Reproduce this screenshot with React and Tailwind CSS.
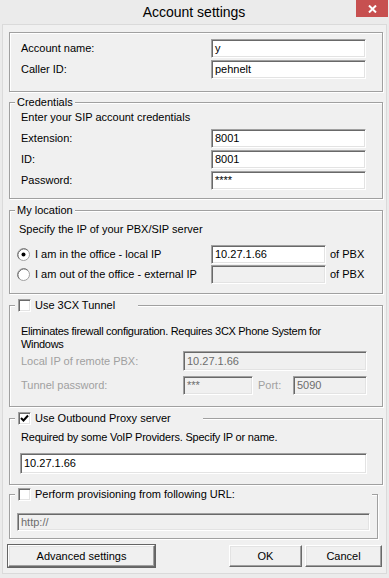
import React from "react";

const sunken =
  "border border-t-[#a0a0a0] border-l-[#a0a0a0] border-b-white border-r-white shadow-[inset_1px_1px_0_#696969,inset_-1px_-1px_0_#e3e3e3]";

function Field({ value, disabled, className = "" }) {
  return (
    <div
      className={`${sunken} ${className} ${
        disabled ? "bg-[#f0f0f0] text-[#6d6d6d]" : "bg-white text-black"
      } flex items-center pl-[3px] text-[11px] leading-none`}
    >
      {value}
    </div>
  );
}

function Check({ checked }) {
  return (
    <div className={`${sunken} w-[13px] h-[13px] bg-white shrink-0 flex items-center justify-center`}>
      {checked && (
        <svg width="9" height="9" viewBox="0 0 9 9">
          <path d="M1 4 L3.5 6.5 L8 1.5" fill="none" stroke="#000" strokeWidth="2" />
        </svg>
      )}
    </div>
  );
}

function Radio({ checked }) {
  return (
    <svg width="13" height="13" viewBox="0 0 13 13" className="shrink-0">
      <circle cx="6.5" cy="6.5" r="6" fill="#fff" stroke="#a0a0a0" />
      <path d="M2.3 10.7 A6 6 0 0 1 10.7 2.3" fill="none" stroke="#696969" />
      {checked && <circle cx="6.5" cy="6.5" r="2" fill="#000" />}
    </svg>
  );
}

function Group({ legend, className = "", children }) {
  return (
    <fieldset
      className={`border border-[#a0a0a0] shadow-[1px_1px_0_#fff,inset_1px_1px_0_#fff] px-[5px] ${className}`}
    >
      {legend}
      {children}
    </fieldset>
  );
}

function TextLegend({ text }) {
  return <legend className="px-[2px] leading-[13px] bg-[#f0f0f0]">{text}</legend>;
}

function CheckLegend({ text, checked, width }) {
  return (
    <legend className={`${width} h-[13px] pl-[3px] flex items-center gap-[4px] bg-[#f0f0f0]`}>
      <Check checked={checked} />
      <span className="leading-[13px]">{text}</span>
    </legend>
  );
}

function Row({ label, value }) {
  return (
    <div className="flex items-center">
      <span className="w-[190px]">{label}</span>
      <Field value={value} className="w-[155px] h-[19px]" />
    </div>
  );
}

function Button({ children, className = "" }) {
  return (
    <button
      type="button"
      className={`h-[22px] bg-[#f0f0f0] border border-t-white border-l-white border-b-[#696969] border-r-[#696969] shadow-[inset_-1px_-1px_0_#a0a0a0,inset_1px_1px_0_#e3e3e3] text-[11px] leading-none text-black ${className}`}
    >
      {children}
    </button>
  );
}

export default function App() {
  return (
    <div className="w-[389px] h-[578px] bg-[#ebebeb] flex flex-col font-['Liberation_Sans',Arial,sans-serif] text-[11px] text-black">
      {/* title bar */}
      <div className="h-[24px] flex items-start shrink-0">
        <div className="flex-1 h-[24px] flex items-center justify-center pl-[32px] text-[14px] text-[#000]">
          Account settings
        </div>
        <div className="w-[32px] h-[17px] mr-[1px] bg-[#c75050] flex items-center justify-center">
          <svg width="9" height="8" viewBox="0 0 9 8">
            <path d="M1 0.5 L8 7.5 M8 0.5 L1 7.5" stroke="#fff" strokeWidth="2" />
          </svg>
        </div>
      </div>

      {/* client area */}
      <div className="flex-1 mx-[2px] mb-[4px] border border-[#dadada] bg-[#f0f0f0] flex flex-col pl-[5px] pr-[3px]">
        <Group className="mt-[7px] ml-[1px] h-[60px]">
          <div className="flex flex-col gap-[2px] pl-[6px] pt-[6px]">
            <Row label="Account name:" value="y" />
            <Row label="Caller ID:" value="pehnelt" />
          </div>
        </Group>

        <Group legend={<TextLegend text="Credentials" />} className="mt-[4px] ml-[1px] h-[103px]">
          <div className="pl-[6px]">
            <div className="mt-[2px] leading-[13px]">Enter your SIP account credentials</div>
            <div className="flex flex-col gap-[2px] mt-[5px]">
              <Row label="Extension:" value="8001" />
              <Row label="ID:" value="8001" />
              <Row label="Password:" value="****" />
            </div>
          </div>
        </Group>

        <Group legend={<TextLegend text="My location" />} className="mt-[5px] ml-[1px] h-[90px]">
          <div className="mt-[6px] pl-[4px] leading-[13px]">Specify the IP of your PBX/SIP server</div>
          <div className="flex flex-col gap-[1px] mt-[9px] pl-[2px]">
            <div className="flex items-center">
              <Radio checked />
              <span className="ml-[5px] w-[176px]">I am in the office - local IP</span>
              <Field value="10.27.1.66" className="w-[115px] h-[19px]" />
              <span className="ml-[4px]">of PBX</span>
            </div>
            <div className="flex items-center">
              <Radio />
              <span className="ml-[5px] w-[176px]">I am out of the office - external IP</span>
              <Field value="" disabled className="w-[115px] h-[19px]" />
              <span className="ml-[4px]">of PBX</span>
            </div>
          </div>
        </Group>

        <Group
          legend={<CheckLegend text="Use 3CX Tunnel" width="w-[123px]" />}
          className="mt-[5px] ml-[1px] h-[108px]"
        >
          <div className="pl-[6px]">
            <div className="mt-[13px] leading-[13px] tracking-[-0.3px]">
              Eliminates firewall configuration. Requires 3CX Phone System for
              <br />
              Windows
            </div>
            <div className="flex items-center">
              <span className="w-[162px] text-[#a0a0a0]">Local IP of remote PBX:</span>
              <Field value="10.27.1.66" disabled className="w-[184px] h-[20px]" />
            </div>
            <div className="flex items-center mt-[5px]">
              <span className="w-[162px] text-[#a0a0a0]">Tunnel password:</span>
              <Field value="***" disabled className="w-[70px] h-[19px]" />
              <span className="ml-[5px] w-[35px] text-[#a0a0a0]">Port:</span>
              <Field value="5090" disabled className="w-[74px] h-[19px]" />
            </div>
          </div>
        </Group>

        <Group
          legend={<CheckLegend text="Use Outbound Proxy server" checked width="w-[188px]" />}
          className="mt-[5px] ml-[1px] h-[73px]"
        >
          <div className="mt-[6px] pl-[6px] leading-[13px] tracking-[-0.2px]">
            Required by some VoIP Providers. Specify IP or name.
          </div>
          <div className="mt-[9px] pl-[5px]">
            <Field value="10.27.1.66" className="w-[347px] h-[21px]" />
          </div>
        </Group>

        <Group
          legend={<CheckLegend text="Perform provisioning from following URL:" width="w-[357px]" />}
          className="mt-[3px] ml-[1px] w-[368px] h-[51px]"
        >
          <div className="mt-[12px] pl-[2px]">
            <Field value="http://" disabled className="w-[353px] h-[18px]" />
          </div>
        </Group>

        <div className="mt-[6px] flex items-center">
          <Button className="w-[147px] outline outline-1 outline-[#646464]">Advanced settings</Button>
          <div className="ml-auto flex gap-[3px] pr-[1px]">
            <Button className="w-[73px]">OK</Button>
            <Button className="w-[77px]">Cancel</Button>
          </div>
        </div>
      </div>
    </div>
  );
}
